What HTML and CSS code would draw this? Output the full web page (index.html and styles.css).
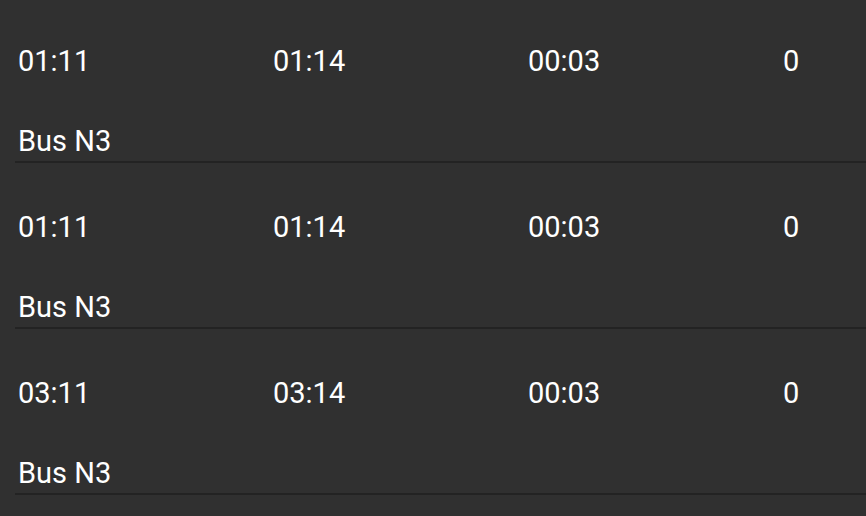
FILE: index.html
```html
<!DOCTYPE html>
<html lang="en">
<head>
<meta charset="utf-8">
<title>Trips</title>
<link rel="stylesheet" href="styles.css">
</head>
<body>
<div class="list">
  <div class="row">
    <div class="cols">
      <span>01:11</span><span>01:14</span><span>00:03</span><span>0</span>
    </div>
    <div class="name">Bus N3</div>
  </div>
  <div class="row">
    <div class="cols">
      <span>01:11</span><span>01:14</span><span>00:03</span><span>0</span>
    </div>
    <div class="name">Bus N3</div>
  </div>
  <div class="row">
    <div class="cols">
      <span>03:11</span><span>03:14</span><span>00:03</span><span>0</span>
    </div>
    <div class="name">Bus N3</div>
  </div>
</div>
</body>
</html>
```
FILE: styles.css
```css
html, body {
  margin: 0;
  padding: 0;
  background: #303030;
  overflow: hidden;
}
body {
  width: 866px;
  height: 516px;
  font-family: Roboto, "Noto Sans", sans-serif;
  font-size: 29px;
  color: #ffffff;
}
.list {
  display: flex;
  flex-direction: column;
  gap: 3px;
}
.row {
  margin-left: 15px;
  padding: 41px 0 0 3px;
  border-bottom: 2px solid #232323;
}
.cols {
  display: grid;
  grid-template-columns: repeat(3, 255px) 1fr;
  line-height: 40px;
  height: 40px;
}
.name {
  margin-top: 40px;
  line-height: 40px;
  height: 40px;
}
```
